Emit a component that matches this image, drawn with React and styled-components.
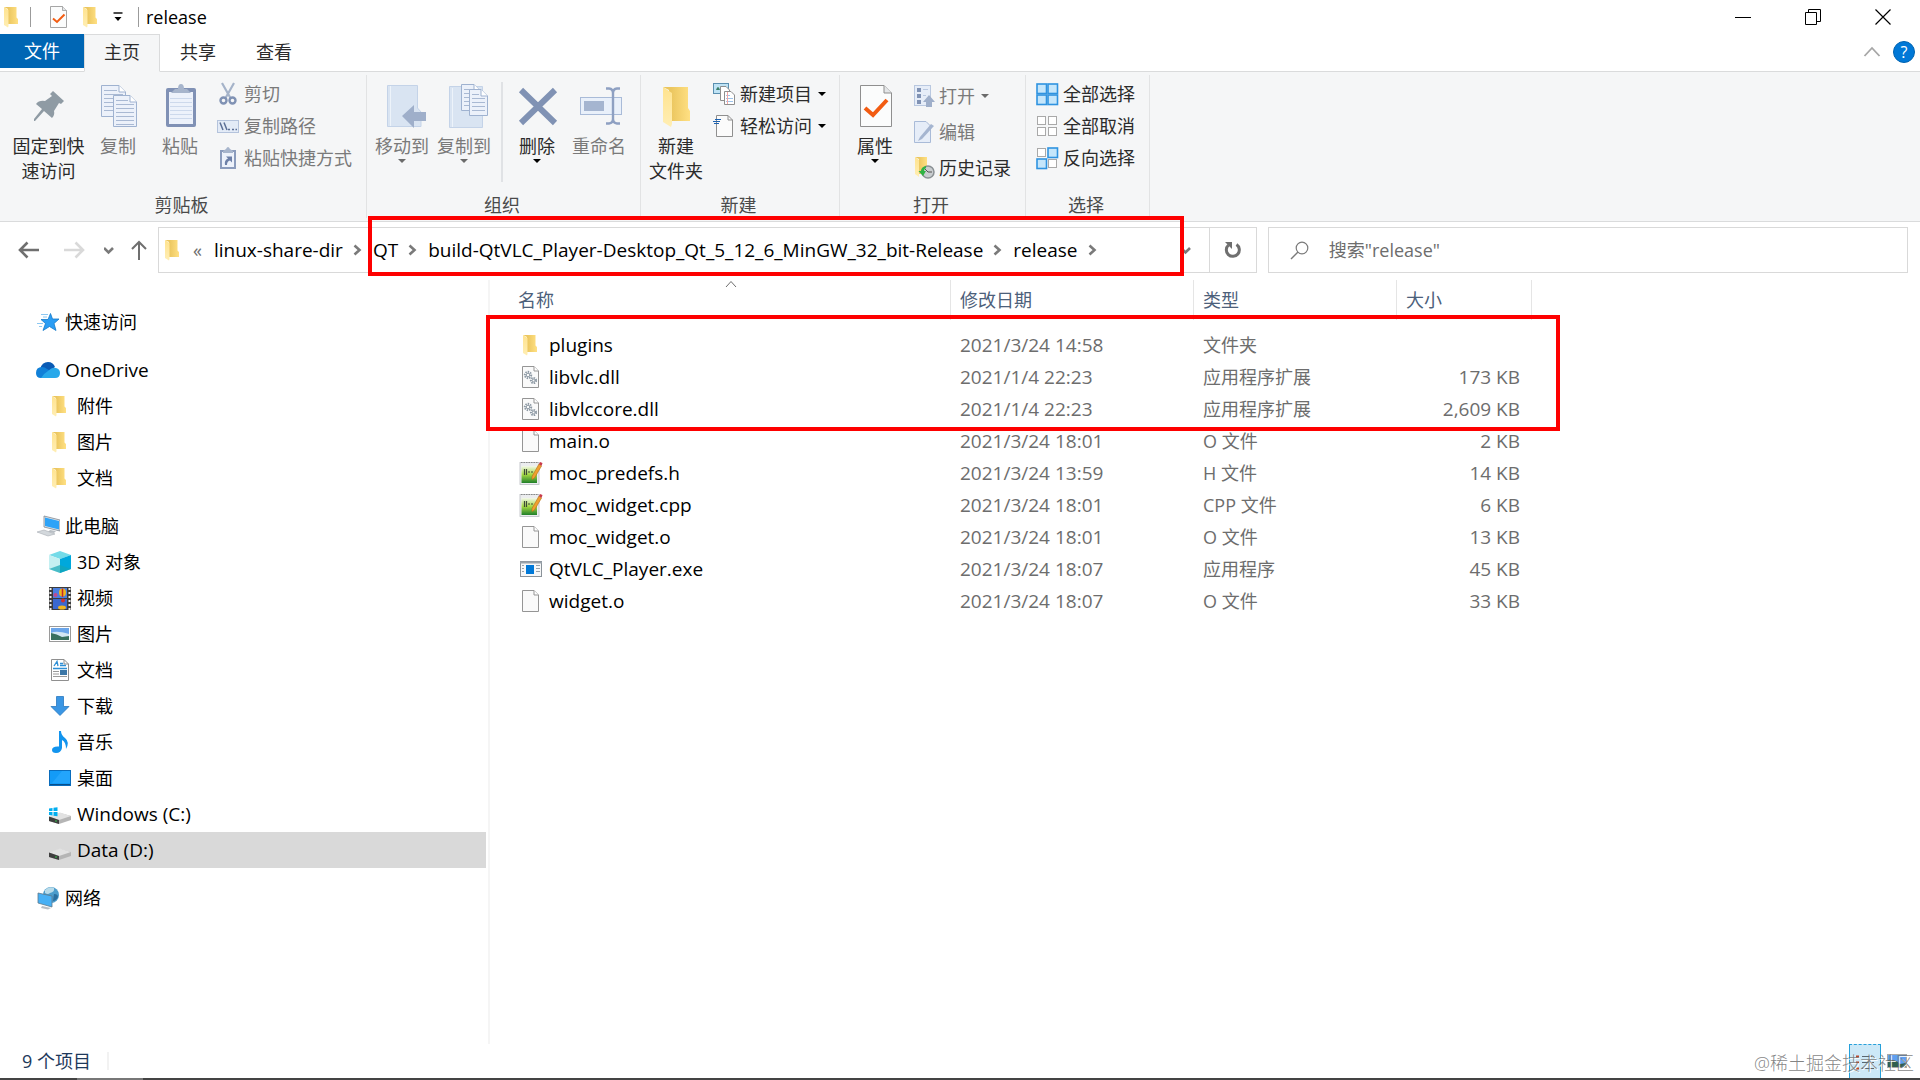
import React from "react";
import styled, { createGlobalStyle, css } from "styled-components";

const GlobalStyle = createGlobalStyle`
  * { box-sizing: border-box; }
  body { margin: 0; background: #fff; }
  body, button, input, table {
    font-family: "Open Sans", "Noto Sans CJK SC", sans-serif;
    font-size: 18px;
    line-height: 24px;
    color: #000;
  }
  button {
    margin: 0; padding: 0; border: 0; background: none;
    display: flex; align-items: center; white-space: nowrap;
  }
  a { color: inherit; text-decoration: none; }
  svg { display: block; flex: none; }
`;

/* ---------- layout ---------- */

const Window = styled.div`
  min-height: 100vh;
  display: flex;
  flex-direction: column;
`;

const TitleBar = styled.header`
  height: 34px;
  display: flex;
  align-items: center;
  padding: 0 22px 0 4px;
`;
const TitleDivider = styled.span`
  width: 1px;
  height: 20px;
  background: #9b9b9b;
  margin: 0 ${(p) => p.$right}px 0 ${(p) => p.$left}px;
`;
const QuickButton = styled.button`
  height: 34px;
  width: ${(p) => p.$w}px;
  justify-content: center;
`;
const WindowTitle = styled.h1`
  margin: 0;
  flex: 1;
  font-size: 18px;
  font-weight: 400;
`;
const WindowControls = styled.div`
  display: flex;
  gap: 40px;
`;
const ControlButton = styled.button`
  width: 30px;
  height: 32px;
  justify-content: center;
`;

const TabBar = styled.nav`
  display: flex;
  height: 38px;
  border-bottom: 1px solid #dadbdc;
`;
const Tab = styled.button`
  width: 76px;
  height: 38px;
  padding-bottom: 2px;
  justify-content: center;
  color: #2b2b2b;
  border: 1px solid transparent;
  ${(p) =>
    p.$active &&
    css`
      background: #f5f6f7;
      border-color: #dadbdc #dadbdc #f5f6f7;
    `}
`;
const FileTab = styled.button`
  width: 84px;
  height: 34px;
  justify-content: center;
  background: #0066b4;
  color: #fff;
`;
const TabTools = styled.div`
  margin-left: auto;
  display: flex;
  align-items: center;
  gap: 12px;
  padding: 0 5px 2px 0;
`;
const HelpButton = styled.button`
  width: 22px;
  height: 22px;
  border-radius: 50%;
  justify-content: center;
  background: #0078d7;
  border: 1px solid #0063b1;
  color: #fff;
  font-size: 16px;
`;

const Ribbon = styled.section`
  display: flex;
  padding: 3px 0;
  background: #f5f6f7;
  border-bottom: 1px solid #dadbdc;
`;
const Group = styled.div`
  width: ${(p) => p.$w}px;
  display: flex;
  flex-direction: column;
  padding-top: 3px;
  border-right: 1px solid #e2e3e4;
`;
const GroupBody = styled.div`
  height: 115px;
  display: flex;
  padding-left: ${(p) => (p.$wide ? 10 : 4)}px;
`;
const GroupLabel = styled.div`
  height: 25px;
  padding-right: 3px;
  text-align: center;
  color: #4a4a4a;
`;
const GroupSplit = styled.span`
  width: 2px;
  height: 100px;
  margin: 4px 3px 0 6px;
  background: #e0e2e5;
`;
const BigButton = styled.button`
  width: ${(p) => (p.$wide ? 77 : 62)}px;
  height: 112px;
  flex-direction: column;
  padding-top: 6px;
  line-height: 25px;
  text-align: center;
  white-space: pre-line;
  color: ${(p) => (p.$off ? "#7a7a7a" : "#2b2b2b")};
`;
const BigIcon = styled.span`
  height: 50px;
`;
const SmallList = styled.div`
  display: flex;
  flex-direction: column;
  padding-left: 5px;
`;
const SmallButton = styled.button`
  height: ${(p) => (p.$tall ? 36 : 32)}px;
  gap: 4px;
  color: ${(p) => (p.$off ? "#7a7a7a" : "#2b2b2b")};
`;
const Caret = styled.span`
  border: 4px solid transparent;
  border-bottom: 0;
  border-top-color: ${(p) => (p.$off ? "#6b6b6b" : "#000")};
  margin-left: ${(p) => (p.$side ? 2 : 0)}px;
`;

const AddressRow = styled.section`
  display: flex;
  align-items: center;
  height: 58px;
  padding: 5px 12px 7px 14px;
`;
const NavButtons = styled.div`
  display: flex;
  flex: none;
`;
const NavButton = styled.button`
  width: ${(p) => p.$w}px;
  height: 30px;
  justify-content: center;
`;
const UpButton = styled(NavButton)`
  padding-left: 6px;
`;
const AddressBox = styled.div`
  position: relative;
  flex: 1;
  min-width: 0;
  height: 46px;
  display: flex;
  align-items: center;
  border: 1px solid #d9d9d9;
  margin-right: 11px;
`;
const Crumbs = styled.div`
  flex: 1;
  min-width: 0;
  display: flex;
  align-items: center;
  gap: 10px;
  padding-left: 6px;
`;
const Crumb = styled.button`
  font-size: 19px;
`;
const CrumbMore = styled.button`
  color: #6d6d6d;
  padding: 0 2px 0 4px;
`;
const DropButton = styled.button`
  width: 34px;
  height: 44px;
  padding-left: 6px;
`;
const RefreshButton = styled.button`
  width: 47px;
  height: 44px;
  justify-content: center;
  border-left: 1px solid #d9d9d9;
`;
const SearchBox = styled.label`
  width: 33.8%;
  height: 46px;
  display: flex;
  align-items: center;
  gap: 20px;
  padding-left: 21px;
  border: 1px solid #d9d9d9;
`;
const SearchInput = styled.input`
  flex: 1;
  min-width: 0;
  border: 0;
  outline: 0;
  padding: 0;
  background: none;
  &::placeholder { color: #6d6d6d; opacity: 1; }
`;

/* red annotation frames lie over the window */
const Mark = styled.div`
  position: absolute;
  border: 4px solid #fe0000;
  pointer-events: none;
`;
const PathMark = styled(Mark)`
  left: 209px;
  right: 72px;
  top: -12px;
  height: 60px;
`;
const FilesMark = styled(Mark)`
  left: -4px;
  right: -28px;
  top: 35px;
  height: 116px;
`;

const Body = styled.main`
  flex: 1;
  display: flex;
`;
const Sidebar = styled.nav`
  width: 490px;
  padding: 24px 2px 0 0;
  border-right: 2px solid #f5f5f5;
  display: flex;
  flex-direction: column;
  gap: 12px;
`;
const SideGroup = styled.div`
  display: flex;
  flex-direction: column;
`;
const SideLink = styled.a`
  height: 36px;
  display: flex;
  align-items: center;
  gap: 5px;
  padding-left: ${(p) => (p.$child ? 48 : 36)}px;
  font-size: ${(p) => (p.$latin ? 19 : 18)}px;
  background: ${(p) => (p.$active ? "#d9d9d9" : "transparent")};
`;

const FilePane = styled.section`
  position: relative;
  align-self: flex-start;
`;
const FileTable = styled.table`
  table-layout: fixed;
  width: 1042px;
  border-collapse: separate;
  border-spacing: 0;
  tbody::before { content: ""; display: block; height: 9px; }
`;
const HeadCell = styled.th`
  position: relative;
  width: ${(p) => p.$w}px;
  height: 40px;
  padding: 0 0 0 ${(p) => (p.$first ? 28 : 9)}px;
  font-weight: 400;
  text-align: left;
  color: #4c607a;
  border-right: 1px solid #e5e5e5;
`;
const SortArrow = styled.svg`
  position: absolute;
  top: 0;
  left: 51%;
`;
const Cell = styled.td`
  height: 32px;
  padding: 0 12px 0 9px;
  color: #6d6d6d;
  font-size: ${(p) => (p.$latin ? 19 : 18)}px;
  text-align: ${(p) => (p.$right ? "right" : "left")};
`;
const NameCell = styled.td`
  height: 32px;
  padding: 0 0 0 29px;
`;
const FileName = styled.a`
  display: flex;
  align-items: center;
  gap: 6px;
  font-size: 19px;
`;

const StatusBar = styled.footer`
  position: relative;
  height: 34px;
  display: flex;
  align-items: center;
  padding: 0 7px 0 22px;
  color: #1e395b;
`;
const StatusCount = styled.span`
  padding-right: 16px;
  line-height: 18px;
  border-right: 2px solid #f2f2f2;
`;
const ViewButtons = styled.div`
  margin-left: auto;
  display: flex;
`;
const ViewButton = styled.button`
  width: 32px;
  height: 34px;
  justify-content: center;
  ${(p) =>
    p.$active &&
    css`
      background: #cce8f7;
      border: 1px solid #26a0da;
      border-top-style: dashed;
      border-bottom: 0;
    `}
`;
const Watermark = styled.span`
  position: absolute;
  right: 6px;
  top: 7px;
  font-weight: 300;
  color: rgba(110, 110, 110, 0.85);
  text-shadow: 1px 1px 0 #fff;
`;
const TaskbarEdge = styled.div`
  height: 2px;
  background: #444;
  padding-left: 77px;
`;
const TaskbarItem = styled.div`
  width: 66px;
  height: 2px;
  background: #777;
`;

/* ---------- icons ---------- */

const Folder = ({ w = 14, h = 21 }) => (
  <svg width={w} height={h} viewBox="0 0 28 42">
    <defs>
      <linearGradient id="fb" x1="0" x2="1"><stop offset="0.3" stopColor="#ebc65f" /><stop offset="1" stopColor="#ffe083" /></linearGradient>
      <linearGradient id="ff" x1="0" x2="0" y1="0" y2="1"><stop offset="0" stopColor="#ffe38f" /><stop offset="1" stopColor="#ffeeb4" /></linearGradient>
    </defs>
    <path d="M0 0H25V21L28 24V34H8V4Z" fill="url(#fb)" />
    <path d="M0 0L9 6V38L8 41L0 36Z" fill="url(#ff)" />
  </svg>
);
const FolderSlot = styled.span`
  width: 22px;
  display: flex;
  padding-left: ${(p) => p.$pad}px;
`;

const CheckPage = ({ w, h }) => (
  <svg width={w} height={h} viewBox="0 0 34 44">
    <path d="M1 1H25L33 9V43H1Z" fill="#fbfcfc" stroke="#8f8f8f" strokeWidth="1.6" />
    <path d="M25 1V9H33" fill="#e4e6e8" stroke="#8f8f8f" strokeWidth="1.4" />
    <path d="M6 25L14 32L29 17" fill="none" stroke="#f25c12" strokeWidth="4" />
  </svg>
);

const PageLines = ({ x, y, w, h, n }) => (
  <g transform={`translate(${x} ${y})`}>
    <path d={`M.5 .5H${w - 7}L${w - 0.5} 7V${h - 0.5}H.5Z`} fill="#ecf1fa" stroke="#9fb2d0" />
    <path d={`M${w - 7} .5V7H${w - 0.5}`} fill="#fff" stroke="#9fb2d0" />
    {Array.from({ length: n }, (_, i) => (
      <path key={i} d={`M3 ${5.5 + i * 4}H${i < 1 ? w - 9 : w - 3}`} stroke="#a9b9d3" />
    ))}
  </g>
);

const PinIcon = () => (
  <svg width="48" height="44" viewBox="0 0 48 44">
    <path d="M28 7L39 17L36 20L34 19L29 27Q30 31 27 34L19 27L10 37L9 37L9 35L17 25L11 20Q14 16 20 17L27 12L25 10Z" fill="#8f9ba4" />
  </svg>
);
const CopyIcon = () => (
  <svg width="48" height="44" viewBox="0 0 48 44">
    <PageLines x={7} y={1} w={25} h={32} n={6} />
    <PageLines x={19} y={11} w={24} h={32} n={7} />
  </svg>
);
const PasteIcon = () => (
  <svg width="48" height="44" viewBox="0 0 48 44">
    <rect x="10" y="4" width="30" height="39" rx="2" fill="#8091b5" />
    <rect x="13" y="8" width="24" height="32" fill="#edf2fb" />
    <path d="M14 14.500H36M14 18.500H36M14 22.500H36M14 26.500H36M14 30.500H36M14 34.500H36" stroke="#cdd9ec" />
    <path d="M15 9L19 5H22Q22 0 25 0T28 5H31L35 9Z" fill="#a7b5cc" />
  </svg>
);
const MoveIcon = () => (
  <svg width="48" height="44" viewBox="0 0 48 44">
    <path d="M9.500 1.500H39.500V24L43 28V42.500H9.500Z" fill="#d9e4f2" stroke="#c4d3e8" />
    <path d="M12.500 2V42" stroke="#edf3fa" />
    <path d="M24 32L36 21V28H48V37H36V44Z" fill="#9fafca" />
  </svg>
);
const CopyToIcon = () => (
  <svg width="48" height="44" viewBox="0 0 48 44">
    <path d="M9.500 2.500H42.500V43.500H9.500Z" fill="#d9e4f2" stroke="#c4d3e8" />
    <path d="M12.500 4V43" stroke="#edf3fa" />
    <PageLines x={21} y={0} w={20} h={27} n={5} />
    <PageLines x={29} y={5} w={19} h={27} n={5} />
  </svg>
);
const DeleteIcon = () => (
  <svg width="48" height="44" viewBox="0 0 48 44">
    <path d="M8 6L42 39M42 6L8 39" stroke="#8092b4" strokeWidth="6" />
  </svg>
);
const RenameIcon = () => (
  <svg width="48" height="44" viewBox="0 0 48 44">
    <rect x="5.500" y="13.500" width="41" height="17" fill="#e9f0fa" stroke="#a9bbd8" />
    <rect x="9" y="17" width="20" height="10" fill="#a5b5d0" />
    <path d="M31 4.500H34Q38 5 38 9V35Q38 39 34 39.500H31M45 4.500H42Q38 5 38 9M38 35Q38 39 42 39.500H45" fill="none" stroke="#8ea0c2" strokeWidth="2.400" />
  </svg>
);
const NewFolderIcon = () => (
  <svg width="48" height="44" viewBox="0 0 48 44">
    <path d="M11 3H36V24L38 27V37H17V6Z" fill="url(#fb)" />
    <path d="M11 3L20 9V40L19 43L11 38Z" fill="url(#ff)" />
  </svg>
);
const PropsIcon = () => (
  <svg width="48" height="44" viewBox="0 0 48 44">
    <path d="M9.500 1.500H33L40.500 9V42.500H9.500Z" fill="#fbfcfc" stroke="#8f8f8f" />
    <path d="M33 1.500V9H40.500" fill="#e4e6e8" stroke="#8f8f8f" />
    <path d="M14 24L22 31L36 16" fill="none" stroke="#f25c12" strokeWidth="4" />
  </svg>
);
const Glyph = ({ children }) => <svg width="24" height="24" viewBox="0 0 24 24">{children}</svg>;
const CutIcon = () => (
  <Glyph>
    <path d="M6 1L15 17M18 1L9 17" stroke="#a5b3c9" strokeWidth="2.200" />
    <circle cx="7.500" cy="18.500" r="3" fill="none" stroke="#8092b4" strokeWidth="2.400" />
    <circle cx="16.500" cy="18.500" r="3" fill="none" stroke="#8092b4" strokeWidth="2.400" />
  </Glyph>
);
const PathIcon = () => (
  <Glyph>
    <rect x="1.500" y="6.500" width="21" height="12" fill="#e3ebf7" stroke="#b4c3dc" />
    <path d="M4 8.500L7 16M8 8.500L11 16M12 15.500H14M16 15.500H18M19.500 15.500H21" stroke="#5b6f96" strokeWidth="1.500" />
  </Glyph>
);
const ShortcutIcon = () => (
  <Glyph>
    <rect x="4" y="4" width="16" height="19" fill="#8b9cbd" />
    <rect x="6" y="6" width="12" height="15" fill="#edf2fb" />
    <path d="M7 5L10 3Q12 -1 14 3L17 5V7H7Z" fill="#a7b5cc" />
    <path d="M9 19Q8 14 12 12.500L10 10.500H16V16.500L14 14.500Q11 15 11 19Z" fill="#6d80a8" />
  </Glyph>
);
const NewItemIcon = () => (
  <Glyph>
    <rect x="1.500" y="1.500" width="15" height="10" fill="#bfe3f5" stroke="#5a8fb0" />
    <path d="M4 8Q6 2 8 8Z" fill="#3b7f6a" />
    <path d="M8.500 4.500H14L17.500 8V18.500H8.500Z" fill="#fff" stroke="#8f8f8f" />
    <path d="M12.500 9.500H19L22.500 13V22.500H12.500Z" fill="#fff" stroke="#8f8f8f" />
    <path d="M14 13.500H18M14 16.500H21M14 19.500H21" stroke="#9ec3ea" /><path d="M15.500 10V22" stroke="#f3a6a6" />
  </Glyph>
);
const EasyIcon = () => (
  <Glyph>
    <path d="M4.500 1.500H16L20.500 6V22.500H4.500Z" fill="#fbfbfb" stroke="#8f8f8f" />
    <path d="M16 1.500V6H20.500" fill="none" stroke="#8f8f8f" />
    <path d="M3 5.500H9M1 7.500H8M2 9.500H7" stroke="#1d62b0" strokeWidth="1.200" />
  </Glyph>
);
const OpenIcon = () => (
  <Glyph>
    <rect x="3.500" y="1.500" width="16" height="20" fill="#e6edf8" stroke="#b9c8e0" />
    <rect x="6" y="4" width="4" height="4" fill="#8092b4" /><rect x="6" y="10" width="4" height="4" fill="#8092b4" /><rect x="6" y="16" width="4" height="4" fill="#8092b4" />
    <path d="M12 5.500H17M12 11.500H15" stroke="#b9c8e0" />
    <path d="M18 11L24 18H21V23H15V18H12Z" fill="#9fafca" />
  </Glyph>
);
const EditIcon = () => (
  <Glyph>
    <path d="M3.500 1.500H15L19.500 6V22.500H3.500Z" fill="#e6edf8" stroke="#a9bbd8" />
    <path d="M20 4L23 6L11 19L7 21L9 17Z" fill="#a5b5d0" />
  </Glyph>
);
const HistoryIcon = () => (
  <Glyph>
    <path d="M4 1H16V18H8V3Z" fill="url(#fb)" /><path d="M4 1L8 4V21L4 18Z" fill="url(#ff)" />
    <circle cx="17" cy="16" r="6" fill="#c9cdd0" stroke="#8a9094" strokeWidth="1.500" />
    <path d="M17 16L14 13M17 16H21" stroke="#555" />
    <path d="M15 10Q10 11 10 15H7.500L12 20L15 15H13Q13 13 15 12Z" fill="#2fb344" />
  </Glyph>
);
const Squares = ({ on }) => (
  <Glyph>
    {[[1, 1], [12, 1], [1, 12], [12, 12]].map(([x, y], i) => (
      <rect key={i} x={x + (on[i] ? 1 : 1.5)} y={y + (on[i] ? 1 : 1.5)} width={on[i] ? 9.5 : 8} height={on[i] ? 9.5 : 8}
        fill={on[i] ? "#c5e6fb" : "#fff"} stroke={on[i] ? "#2f93e0" : "#a9a9a9"} strokeWidth={on[i] ? 1.6 : 1} />
    ))}
  </Glyph>
);

const Chevron = ({ dir = "right" }) => (
  <svg width="10" height="12" viewBox="0 0 10 12">
    <path d={dir === "right" ? "M1.500 1.500L6.500 6L1.500 10.500" : "M0 4L4.500 8.500L9 4"} fill="none" stroke="#7a7a7a" strokeWidth="2.600" />
  </svg>
);
const Arrow = ({ color, flip }) => (
  <svg width="22" height="18" viewBox="0 0 22 18">
    <path d={flip ? "M1 9H20M12.500 1.500L20 9L12.500 16.500" : "M21 9H2M9.500 1.500L2 9L9.500 16.500"} fill="none" stroke={color} strokeWidth="2.600" />
  </svg>
);

const StarIcon = () => (
  <Glyph>
    <path d="M14.500 3.500L16.500 9H23L18 13.500L20 20.500L13.500 16.500L7 20.500L9.500 13.500L5 9.500H12Z" fill="#2a9df4" stroke="#1478c8" strokeWidth=".8" />
    <path d="M5 4.500H12M7 7H11M1 13.500H7M3 16.500H6" stroke="#8cc8f2" />
  </Glyph>
);
const CloudIcon = () => (
  <Glyph>
    <path d="M4 11Q6 4 12 4Q17 4 19 9L12 14Z" fill="#0a5bb5" />
    <path d="M0 15Q0 9 6 9Q9 9 11 11L17 14L10 20H5Q0 20 0 15Z" fill="#1180d8" />
    <path d="M5 20Q7 16 12 13Q16 9 20 10Q24 11 24 15Q24 20 19 20Z" fill="#28a8ea" />
  </Glyph>
);
const PcIcon = () => (
  <Glyph>
    <path d="M8 2L24 6V17L8 13Z" fill="#e0e4e8" stroke="#7d8790" strokeWidth=".8" />
    <path d="M9 3.500L23 7V15.500L9 12Z" fill="#2ea3f7" />
    <path d="M14 16L20 17L18 19L12 18Z" fill="#b8bec4" />
    <path d="M1 18L8 16L19 20L12 22Z" fill="#d3d8dc" stroke="#a7adb3" strokeWidth=".6" />
  </Glyph>
);
const NetIcon = () => (
  <Glyph>
    <circle cx="15" cy="9" r="8" fill="#4b9ccb" /><path d="M9 4Q13 0 18 2Q19 6 14 7Q12 9 9 7Z" fill="#b8dbe9" /><path d="M18 8Q22 8 22 11Q20 15 17 15Z" fill="#2a6f9f" />
    <path d="M2 7L16 10V21L2 17Z" fill="#47b0f5" stroke="#5f7a8c" strokeWidth=".8" />
    <path d="M6 20L15 22L12 23.500L5 22Z" fill="#b8bec4" />
  </Glyph>
);
const CubeIcon = () => (
  <Glyph><path d="M12 1L23 5L12 9L1 5Z" fill="#74dbe8" /><path d="M1 5L12 9V23L1 19Z" fill="#c4f0f2" /><path d="M12 9L23 5V19L12 23Z" fill="#00a8dc" /><path d="M1 19L12 15L23 19L12 23Z" fill="#14a5b5" opacity=".7" /></Glyph>
);
const VideoIcon = () => (
  <Glyph>
    <rect x="1" y="1" width="22" height="23" fill="#3c3c3c" />
    <rect x="5" y="2" width="14" height="10" fill="#4a7fe0" /><rect x="5" y="13" width="14" height="10" fill="#3a68cf" />
    <path d="M2.500 2V24M21.500 2V24" stroke="#eee" strokeWidth="2" strokeDasharray="2 2" />
    <ellipse cx="14.500" cy="6.500" rx="3.500" ry="4" fill="#f0b51e" /><path d="M14.500 2.500V11" stroke="#c3282d" strokeWidth="1.500" />
    <circle cx="7.500" cy="9" r="2" fill="#c14a8c" /><circle cx="15" cy="14.500" r="2" fill="#d03030" /><ellipse cx="14" cy="21.500" rx="4" ry="2" fill="#f0b51e" />
  </Glyph>
);
const PictureIcon = () => (
  <Glyph><rect x="1.500" y="4.500" width="21" height="15" fill="#fff" stroke="#9a9a9a" /><rect x="3" y="6" width="18" height="12" fill="#6aa5ea" /><path d="M3 11Q8 8 21 12V15H3Z" fill="#d3e6f3" /><path d="M3 11Q9 12 14 15L21 14V18H3Z" fill="#39705f" /></Glyph>
);
const DocIcon = () => (
  <Glyph>
    <path d="M3.500 1.500H16L20.500 6V22.500H3.500Z" fill="#fff" stroke="#8f8f8f" /><path d="M16 1.500V6H20.500" fill="none" stroke="#8f8f8f" />
    <path d="M6 8L9 3.500L10 8M12 5.500H15M12 7.500H18M5 10.500H19" fill="none" stroke="#2e8fd6" strokeWidth="1.300" />
    <path d="M5 13.500H11M5 16H11M5 18.500H19" stroke="#9a9a9a" /><rect x="12" y="12" width="7" height="5" fill="#3d78a8" />
  </Glyph>
);
const DownIcon = () => <Glyph><path d="M8.500 2.500H15.500V12.500H21L12 21.500L3 12.500H8.500Z" fill="#3a96e4" stroke="#2878c0" strokeWidth=".8" /></Glyph>;
const MusicIcon = () => <Glyph><path d="M11 1H13Q13 5 17 8Q22 12 18 19Q18 12 14 10V18Q13 23 8 23Q4 23 4 20Q4 16 11 16.500Z" fill="#1294ee" /></Glyph>;
const DesktopIcon = () => <Glyph><rect x="1.500" y="4.500" width="21" height="15" fill="#139bf7" stroke="#0a6cbc" /><path d="M14 5L4 17H22V5Z" fill="#2fabff" opacity=".6" /><path d="M2 18.500H22" stroke="#084f8c" /></Glyph>;
const DriveIcon = ({ win }) => (
  <Glyph>
    <path d="M1 15L12 11L23 14V18L11 22L1 19Z" fill="#b5b5b5" />
    <path d="M1 14.500L12 10.500L23 14L11 18Z" fill="#e2e2e2" />
    <path d="M1 14.500L11 18V22L1 19Z" fill="#3e3e3e" /><path d="M8 18V20" stroke="#35c24a" />
    {win && <path d="M1 6.500L4.500 6V9H1ZM5.500 5.800L9.500 5.200V9H5.500ZM1 10H4.500V13.500L1 13ZM5.500 10H9.500V14.200L5.500 13.700Z" fill="#00adef" />}
  </Glyph>
);

const PageIcon = ({ gears }) => (
  <Glyph>
    <path d="M3.500 1.500H15L19.500 6V22.500H3.500Z" fill="#fafafa" stroke="#959595" /><path d="M15 1.500V6H19.500" fill="#fff" stroke="#959595" />
    {gears && (
      <g fill="none" stroke="#8c98a3">
        <circle cx="9" cy="10" r="3.200" strokeWidth="2" strokeDasharray="1.400 1" /><circle cx="9" cy="10" r="1.800" />
        <circle cx="14.500" cy="15.500" r="2.600" strokeWidth="2" strokeDasharray="1.400 1" /><circle cx="14.500" cy="15.500" r="1.300" />
      </g>
    )}
  </Glyph>
);
const CodeIcon = () => (
  <Glyph>
    <defs><linearGradient id="gr" x1="0" x2="0" y1="0" y2="1"><stop offset="0" stopColor="#f3f8ea" /><stop offset=".5" stopColor="#a4d843" /><stop offset="1" stopColor="#1f7f2a" /></linearGradient></defs>
    <rect x="1" y="1.500" width="19" height="22" fill="#ecedef" stroke="#b9bdc2" strokeWidth=".8" />
    <path d="M2 1.500H19" stroke="#8a8a8a" strokeDasharray="1.500 1" /><rect x="2.500" y="5" width="15.500" height="17" fill="url(#gr)" />
    <path d="M5.500 8V14M7.500 8V14M9 11H11M12 11H14" stroke="#3d4a35" strokeWidth="1.200" />
    <path d="M20 3L22.500 5L15.500 17L13 18.500V15.500Z" fill="#f0a030" stroke="#b56f14" strokeWidth=".6" /><path d="M20 3L21 1L23.500 2L22.500 5Z" fill="#c8394a" />
  </Glyph>
);
const ExeIcon = () => (
  <Glyph>
    <rect x="1.500" y="4.500" width="21" height="15" fill="#f6f7f8" stroke="#8a9299" /><path d="M1 5.500H23" stroke="#9aa3ab" strokeWidth="2" />
    <rect x="7" y="8" width="8" height="9" fill="#0078d7" /><path d="M3 8.500H5M3 11.500H5M3 14.500H5M17 8.500H21M17 11.500H21M17 14.500H21" stroke="#9aa3ab" />
  </Glyph>
);

/* ---------- data ---------- */

const sidebar = [
  [{ icon: <StarIcon />, text: "快速访问" }],
  [
    { icon: <CloudIcon />, text: "OneDrive", latin: true },
    ...["附件", "图片", "文档"].map((text) => ({ child: true, icon: <FolderSlot $pad={4}><Folder /></FolderSlot>, text })),
  ],
  [
    { icon: <PcIcon />, text: "此电脑" },
    { child: true, icon: <CubeIcon />, text: "3D 对象" },
    { child: true, icon: <VideoIcon />, text: "视频" },
    { child: true, icon: <PictureIcon />, text: "图片" },
    { child: true, icon: <DocIcon />, text: "文档" },
    { child: true, icon: <DownIcon />, text: "下载" },
    { child: true, icon: <MusicIcon />, text: "音乐" },
    { child: true, icon: <DesktopIcon />, text: "桌面" },
    { child: true, icon: <DriveIcon win />, text: "Windows (C:)", latin: true },
    { child: true, icon: <DriveIcon />, text: "Data (D:)", active: true, latin: true },
  ],
  [{ icon: <NetIcon />, text: "网络" }],
];

const files = [
  ["folder", "plugins", "2021/3/24 14:58", "文件夹", ""],
  ["dll", "libvlc.dll", "2021/1/4 22:23", "应用程序扩展", "173 KB"],
  ["dll", "libvlccore.dll", "2021/1/4 22:23", "应用程序扩展", "2,609 KB"],
  ["page", "main.o", "2021/3/24 18:01", "O 文件", "2 KB"],
  ["code", "moc_predefs.h", "2021/3/24 13:59", "H 文件", "14 KB"],
  ["code", "moc_widget.cpp", "2021/3/24 18:01", "CPP 文件", "6 KB"],
  ["page", "moc_widget.o", "2021/3/24 18:01", "O 文件", "13 KB"],
  ["exe", "QtVLC_Player.exe", "2021/3/24 18:07", "应用程序", "45 KB"],
  ["page", "widget.o", "2021/3/24 18:07", "O 文件", "33 KB"],
];
const fileIcons = {
  folder: <FolderSlot $pad={4}><Folder /></FolderSlot>,
  dll: <PageIcon gears />,
  page: <PageIcon />,
  code: <CodeIcon />,
  exe: <ExeIcon />,
};
const IconSlot = styled.span`
  width: 24px;
  display: flex;
`;

const crumbs = ["linux-share-dir", "QT", "build-QtVLC_Player-Desktop_Qt_5_12_6_MinGW_32_bit-Release", "release"];

function Big({ icon, children, off, wide, caret }) {
  return (
    <BigButton $off={off} $wide={wide}>
      <BigIcon>{icon}</BigIcon>
      {children}
      {caret && <Caret $off={off} />}
    </BigButton>
  );
}
function Small({ icon, children, off, tall, caret }) {
  return (
    <SmallButton $off={off} $tall={tall}>
      {icon}
      {children}
      {caret && <Caret $side $off={off} />}
    </SmallButton>
  );
}

export default function App() {
  return (
    <Window>
      <GlobalStyle />
      <TitleBar>
        <Folder />
        <TitleDivider $left={12} $right={12} />
        <QuickButton $w={31} aria-label="属性"><CheckPage w={17} h={22} /></QuickButton>
        <QuickButton $w={31} aria-label="新建文件夹"><Folder /></QuickButton>
        <QuickButton $w={25} aria-label="自定义快速访问工具栏">
          <svg width="10" height="10" viewBox="0 0 10 10"><path d="M.5 1H9.500" stroke="#000" strokeWidth="1.400" /><path d="M1.500 5H8.500L5 9Z" /></svg>
        </QuickButton>
        <TitleDivider $left={8} $right={7} />
        <WindowTitle>release</WindowTitle>
        <WindowControls>
          <ControlButton aria-label="最小化"><svg width="16" height="16"><path d="M0 8.500H16" stroke="#000" /></svg></ControlButton>
          <ControlButton aria-label="还原"><svg width="16" height="16"><path d="M.5 3.500H11.500V15.500H.5ZM3.500 3V.5H15.500V12.500H12" fill="none" stroke="#000" /></svg></ControlButton>
          <ControlButton aria-label="关闭"><svg width="16" height="16"><path d="M.5 .5L15.500 15.500M15.500 .5L.5 15.500" stroke="#000" strokeWidth="1.200" /></svg></ControlButton>
        </WindowControls>
      </TitleBar>

      <TabBar>
        <FileTab>文件</FileTab>
        <Tab $active>主页</Tab>
        <Tab>共享</Tab>
        <Tab>查看</Tab>
        <TabTools>
          <button aria-label="折叠功能区"><svg width="18" height="12"><path d="M1.500 10L9 2L16.500 10" fill="none" stroke="#a6a6a6" strokeWidth="1.800" /></svg></button>
          <HelpButton>?</HelpButton>
        </TabTools>
      </TabBar>

      <Ribbon>
        <Group $w={367}>
          <GroupBody $wide>
            <Big wide icon={<PinIcon />}>{"固定到快\n速访问"}</Big>
            <Big off icon={<CopyIcon />}>复制</Big>
            <Big off icon={<PasteIcon />}>粘贴</Big>
            <SmallList>
              <Small off icon={<CutIcon />}>剪切</Small>
              <Small off icon={<PathIcon />}>复制路径</Small>
              <Small off icon={<ShortcutIcon />}>粘贴快捷方式</Small>
            </SmallList>
          </GroupBody>
          <GroupLabel>剪贴板</GroupLabel>
        </Group>
        <Group $w={274}>
          <GroupBody>
            <Big off caret icon={<MoveIcon />}>移动到</Big>
            <Big off caret icon={<CopyToIcon />}>复制到</Big>
            <GroupSplit />
            <Big caret icon={<DeleteIcon />}>删除</Big>
            <Big off icon={<RenameIcon />}>重命名</Big>
          </GroupBody>
          <GroupLabel>组织</GroupLabel>
        </Group>
        <Group $w={199}>
          <GroupBody>
            <Big icon={<NewFolderIcon />}>{"新建\n文件夹"}</Big>
            <SmallList>
              <Small caret icon={<NewItemIcon />}>新建项目</Small>
              <Small caret icon={<EasyIcon />}>轻松访问</Small>
            </SmallList>
          </GroupBody>
          <GroupLabel>新建</GroupLabel>
        </Group>
        <Group $w={186}>
          <GroupBody>
            <Big caret icon={<PropsIcon />}>属性</Big>
            <SmallList>
              <Small tall off caret icon={<OpenIcon />}>打开</Small>
              <Small tall off icon={<EditIcon />}>编辑</Small>
              <Small tall icon={<HistoryIcon />}>历史记录</Small>
            </SmallList>
          </GroupBody>
          <GroupLabel>打开</GroupLabel>
        </Group>
        <Group $w={124}>
          <GroupBody>
            <SmallList>
              <Small icon={<Squares on={[1, 1, 1, 1]} />}>全部选择</Small>
              <Small icon={<Squares on={[0, 0, 0, 0]} />}>全部取消</Small>
              <Small icon={<Squares on={[0, 1, 1, 0]} />}>反向选择</Small>
            </SmallList>
          </GroupBody>
          <GroupLabel>选择</GroupLabel>
        </Group>
      </Ribbon>

      <AddressRow>
        <NavButtons>
          <NavButton $w={30} aria-label="后退"><Arrow color="#6f6f6f" /></NavButton>
          <NavButton $w={60} aria-label="前进"><Arrow flip color="#d9d9d9" /></NavButton>
          <NavButton $w={10} aria-label="最近浏览的位置"><Chevron dir="down" /></NavButton>
          <UpButton $w={44} aria-label="上移"><svg width="16" height="20"><path d="M8 20V2M1 9L8 2L15 9" fill="none" stroke="#6f6f6f" strokeWidth="2" /></svg></UpButton>
        </NavButtons>
        <AddressBox>
          <Crumbs>
            <Folder />
            <CrumbMore>«</CrumbMore>
            {crumbs.map((c) => (
              <React.Fragment key={c}>
                <Crumb>{c}</Crumb>
                <Chevron />
              </React.Fragment>
            ))}
          </Crumbs>
          <DropButton aria-label="上一个位置"><Chevron dir="down" /></DropButton>
          <RefreshButton aria-label="刷新">
            <svg width="18" height="18"><path d="M4.500 4A6.500 6.500 0 1 0 12.500 3.500" fill="none" stroke="#6f6f6f" strokeWidth="3" /><path d="M1 1H8V8Z" fill="#6f6f6f" /></svg>
          </RefreshButton>
          <PathMark />
        </AddressBox>
        <SearchBox>
          <svg width="19" height="19"><circle cx="12" cy="7" r="5.800" fill="none" stroke="#7a7a7a" strokeWidth="1.200" /><path d="M8 11L1 18" stroke="#7a7a7a" strokeWidth="1.400" /></svg>
          <SearchInput aria-label="搜索" placeholder={'搜索"release"'} />
        </SearchBox>
      </AddressRow>

      <Body>
        <Sidebar>
          {sidebar.map((group, g) => (
            <SideGroup key={g}>
              {group.map((item) => (
                <SideLink key={item.text} href="#" $child={item.child} $active={item.active} $latin={item.latin}>
                  <IconSlot>{item.icon}</IconSlot>
                  {item.text}
                </SideLink>
              ))}
            </SideGroup>
          ))}
        </Sidebar>
        <FilePane>
          <FileTable>
            <thead>
              <tr>
                <HeadCell $w={461} $first>
                  名称
                  <SortArrow width="12" height="8"><path d="M1 7L6 1.500L11 7" fill="none" stroke="#6d6d6d" /></SortArrow>
                </HeadCell>
                <HeadCell $w={243}>修改日期</HeadCell>
                <HeadCell $w={203}>类型</HeadCell>
                <HeadCell $w={135}>大小</HeadCell>
              </tr>
            </thead>
            <tbody>
              {files.map(([kind, name, date, type, size]) => (
                <tr key={name}>
                  <NameCell>
                    <FileName href="#"><IconSlot>{fileIcons[kind]}</IconSlot>{name}</FileName>
                  </NameCell>
                  <Cell $latin>{date}</Cell>
                  <Cell>{type}</Cell>
                  <Cell $latin $right>{size}</Cell>
                </tr>
              ))}
            </tbody>
          </FileTable>
          <FilesMark />
        </FilePane>
      </Body>

      <StatusBar>
        <StatusCount>9 个项目</StatusCount>
        <ViewButtons>
          <ViewButton $active aria-label="详细信息">
            <svg width="20" height="16"><path d="M1 2.500H4M1 8.500H4M1 14.500H4" stroke="#b8482e" strokeWidth="2" /><path d="M7 2.500H19M7 8.500H19M7 14.500H19" stroke="#5b6770" /></svg>
          </ViewButton>
          <ViewButton aria-label="大缩略图">
            <svg width="20" height="14"><rect x=".5" y=".5" width="19" height="13" fill="#5f9ff0" stroke="#aaa" /><path d="M1 6Q8 5 13 10L19 9V13H1Z" fill="#2f5f4f" /></svg>
          </ViewButton>
        </ViewButtons>
        <Watermark>@稀土掘金技术社区</Watermark>
      </StatusBar>
      <TaskbarEdge><TaskbarItem /></TaskbarEdge>
    </Window>
  );
}
